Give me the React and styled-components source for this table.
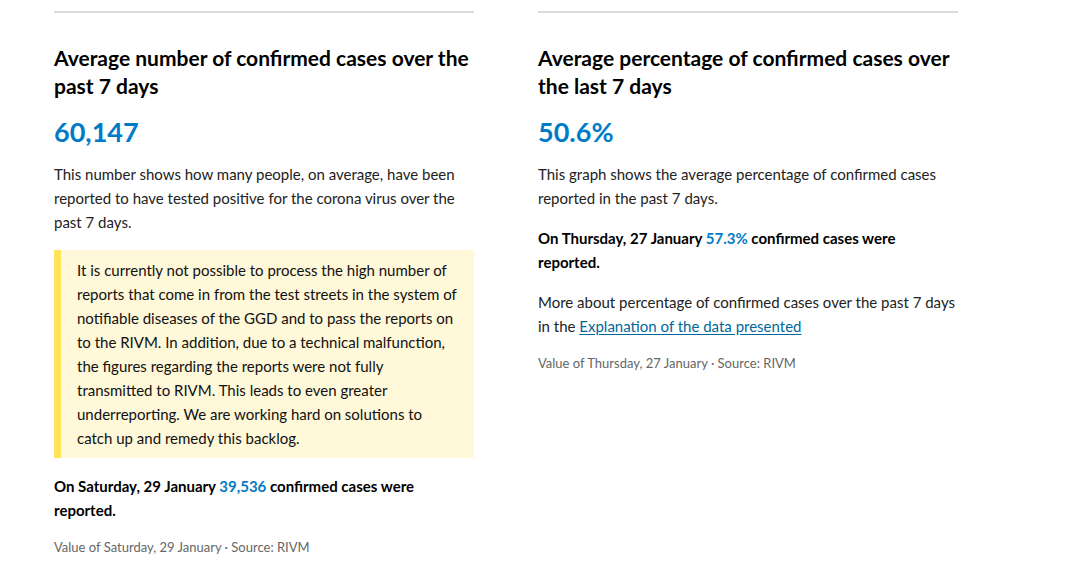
import React from "react";
import styled, { createGlobalStyle } from "styled-components";

const GlobalStyle = createGlobalStyle`
  body {
    margin: 0;
    background: #ffffff;
    font-family: Lato, "Open Sans", sans-serif;
    color: #000000;
  }
`;

const Page = styled.div`
  display: grid;
  grid-template-columns: 420px 420px;
  column-gap: 64px;
  padding: 11px 0 0 54px;
  align-items: start;
`;

const Tile = styled.article`
  border-top: 2px solid #dbdbdb;
  padding-top: 31px;
`;

const Title = styled.h3`
  margin: 0;
  font-size: 21px;
  font-weight: 700;
  line-height: 28px;
  color: #000;
`;

const BigNumber = styled.div`
  margin: 14px 0 12px;
  font-size: 27px;
  font-weight: 700;
  line-height: 36px;
  color: #007bc7;
`;

const Text = styled.p`
  margin: 0 0 16px;
  font-size: 15px;
  line-height: 24px;
  font-weight: ${({ $bold }) => ($bold ? 700 : 400)};
  color: ${({ $bold }) => ($bold ? "#000" : "#222")};
`;

const Highlight = styled.span`
  color: #007bc7;
`;

const Warning = styled.div`
  background: #fff8d9;
  border-left: 7px solid #ffe35c;
  padding: 8px 16px;
  margin: 0 0 16px;
  font-size: 15px;
  line-height: 24px;
  color: #111;
`;

const Link = styled.a`
  color: #01689b;
  text-decoration: underline;
  text-underline-offset: 2px;
`;

const Source = styled.div`
  font-size: 13px;
  line-height: 18px;
  color: #666;
`;

export default function App() {
  return (
    <>
      <GlobalStyle />
      <Page>
        <Tile>
          <Title>Average number of confirmed cases over the past 7 days</Title>
          <BigNumber>60,147</BigNumber>
          <Text>
            This number shows how many people, on average, have been reported to
            have tested positive for the corona virus over the past 7 days.
          </Text>
          <Warning>
            It is currently not possible to process the high number of reports
            that come in from the test streets in the system of notifiable
            diseases of the GGD and to pass the reports on to the RIVM. In
            addition, due to a technical malfunction, the figures regarding the
            reports were not fully transmitted to RIVM. This leads to even greater
            underreporting. We are working hard on solutions to catch up and
            remedy this backlog.
          </Warning>
          <Text $bold>
            On Saturday, 29 January <Highlight>39,536</Highlight> confirmed cases
            were reported.
          </Text>
          <Source>Value of Saturday, 29 January · Source: RIVM</Source>
        </Tile>
        <Tile>
          <Title>Average percentage of confirmed cases over the last 7 days</Title>
          <BigNumber>50.6%</BigNumber>
          <Text>
            This graph shows the average percentage of confirmed cases reported in
            the past 7 days.
          </Text>
          <Text $bold>
            On Thursday, 27 January <Highlight>57.3%</Highlight> confirmed cases
            were reported.
          </Text>
          <Text>
            More about percentage of confirmed cases over the past 7 days in the{" "}
            <Link href="#">Explanation of the data presented</Link>
          </Text>
          <Source>Value of Thursday, 27 January · Source: RIVM</Source>
        </Tile>
      </Page>
    </>
  );
}
